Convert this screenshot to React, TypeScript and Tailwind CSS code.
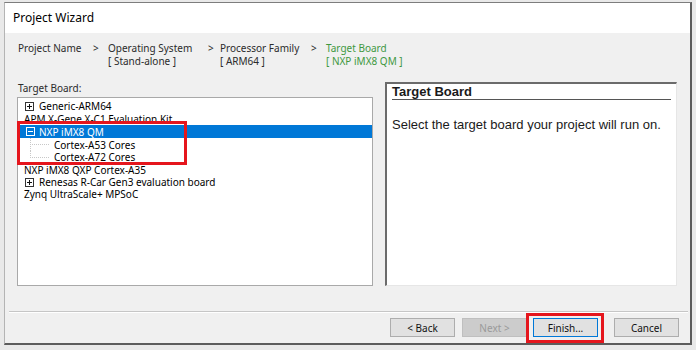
import React from "react";

const ui = "font-['Noto_Sans',sans-serif]";

function ExpandBox({ open }: { open?: boolean }) {
  return (
    <svg width="9" height="9" viewBox="0 0 9 9" className="shrink-0">
      <rect x="0.5" y="0.5" width="8" height="8" fill="none" stroke={open ? "#ffffff" : "#333333"} />
      <line x1="2" y1="4.5" x2="7" y2="4.5" stroke={open ? "#ffffff" : "#111111"} />
      {!open && <line x1="4.5" y1="2" x2="4.5" y2="7" stroke="#111111" />}
    </svg>
  );
}

function TreeLine({ last }: { last?: boolean }) {
  return (
    <svg width="20" height="13" viewBox="0 0 20 13" className="shrink-0">
      <line x1="0.5" y1="0" x2="0.5" y2={last ? 6.5 : 13} stroke="#c8c8c8" strokeDasharray="1 1" />
      <line x1="0" y1="6.5" x2="20" y2="6.5" stroke="#c8c8c8" strokeDasharray="1 1" />
    </svg>
  );
}

function Crumb({ title, value, active }: { title: string; value?: string; active?: boolean }) {
  return (
    <div className={active ? "text-[#3f983f]" : "text-[#2b2b2b]"}>
      <div>{title}</div>
      {value && <div>{value}</div>}
    </div>
  );
}

function Btn({ label, disabled, focus, className }: { label: string; disabled?: boolean; focus?: boolean; className?: string }) {
  return (
    <div
      className={
        "w-[65px] h-[19px] flex items-center justify-center text-[10px] leading-[12px] border " +
        (disabled
          ? "bg-[#cccccc] border-[#bfbfbf] text-[#9a9a9a] "
          : focus
          ? "bg-[#e1e1e1] border-[#0078d7] text-[#111] "
          : "bg-[#e1e1e1] border-[#adadad] text-[#111] ") +
        (className ?? "")
      }
    >
      {label}
    </div>
  );
}

export default function App() {
  return (
    <div className={"w-[696px] h-[350px] bg-[#e9e9e9] pt-[2px] pl-[4px] overflow-hidden " + ui}>
      <div className="w-[688px] h-[343px] flex flex-col bg-[#f0f0f0] border-l border-l-[#b4b4b4] border-t border-t-[#7d7d7d] border-r-2 border-r-[#5c5c5c] border-b-2 border-b-[#5c5c5c]">
        {/* Title bar */}
        <div className="h-[30px] bg-white flex items-center pl-[8px] text-[12px] text-black">Project Wizard</div>

        {/* Breadcrumb */}
        <div className="flex pt-[9px] pl-[13px] text-[10px] leading-[13px]">
          <div className="w-[72px]"><Crumb title="Project Name" /></div>
          <div className="w-[18px] pl-[3px] text-[#2b2b2b]">&gt;</div>
          <div className="w-[97px]"><Crumb title="Operating System" value="[ Stand-alone ]" /></div>
          <div className="w-[15px] pl-[3px] text-[#2b2b2b]">&gt;</div>
          <div className="w-[88px]"><Crumb title="Processor Family" value="[ ARM64 ]" /></div>
          <div className="w-[18px] pl-[3px] text-[#2b2b2b]">&gt;</div>
          <Crumb title="Target Board" value="[ NXP iMX8 QM ]" active />
        </div>

        {/* Middle */}
        <div className="flex mt-[14px] pl-[12px]">
          <div className="w-[356px] flex flex-col">
            <div className="h-[12px] leading-[12px] text-[10px] text-[#2b2b2b] pl-[1px]">Target Board:</div>
            <div className="relative mt-[3px] h-[189px] bg-white border border-[#a9a9a9] pt-[2px] text-[10px] leading-[12px] text-black">
              <div className="h-[12px] flex items-center pl-[7px] gap-[5px]"><ExpandBox />Generic-ARM64</div>
              <div className="h-[13px] flex items-center pl-[6px]">APM X-Gene X-C1 Evaluation Kit</div>
              <div className="h-[13px] flex items-center pl-[8px] gap-[4px] bg-[#0078d7] text-white"><ExpandBox open />NXP iMX8 QM</div>
              <div className="h-[13px] flex items-center pl-[12px] gap-[4px]"><TreeLine />Cortex-A53 Cores</div>
              <div className="h-[12px] flex items-center pl-[12px] gap-[4px]"><TreeLine last />Cortex-A72 Cores</div>
              <div className="h-[13px] flex items-center pl-[6px]">NXP iMX8 QXP Cortex-A35</div>
              <div className="h-[12px] flex items-center pl-[7px] gap-[5px]"><ExpandBox />Renesas R-Car Gen3 evaluation board</div>
              <div className="h-[12px] flex items-center pl-[6px]">Zynq UltraScale+ MPSoC</div>
              {/* annotation */}
              <div className="absolute left-[-1px] top-[23px] w-[170px] h-[44px] border-[3px] border-[#e5161d]" />
            </div>
          </div>

          <div className="ml-[12px] w-[292px] h-[204px] bg-white border-l-2 border-t-2 border-l-[#6b6b6b] border-t-[#6b6b6b] border-r border-b border-r-[#e6e6e6] border-b-[#e6e6e6] px-[5px] pt-[1px] font-['Liberation_Sans',Arial,sans-serif] text-[#1a1a1a]">
            <div className="text-[13px] leading-[13px] font-bold pb-[1px] border-b border-[#555]">Target Board</div>
            <div className="mt-[18px] text-[13px] leading-[14px]">Select the target board your project will run on.</div>
          </div>
        </div>

        {/* Separator */}
        <div className="mt-[25px] ml-[4px] mr-[2px] h-[2px] border-t border-[#c6c6c6] border-b border-b-white" />

        {/* Buttons */}
        <div className="flex justify-end pr-[11px] mt-[5px]">
          <Btn label="< Back" />
          <Btn label="Next >" disabled className="ml-[7px]" />
          <div className="relative ml-[6px]">
            <Btn label="Finish..." focus />
            <div className="absolute left-[-7px] top-[-5px] right-[-6px] bottom-[-6px] border-[3px] border-[#e5161d]" />
          </div>
          <Btn label="Cancel" className="ml-[16px]" />
        </div>
      </div>
    </div>
  );
}
